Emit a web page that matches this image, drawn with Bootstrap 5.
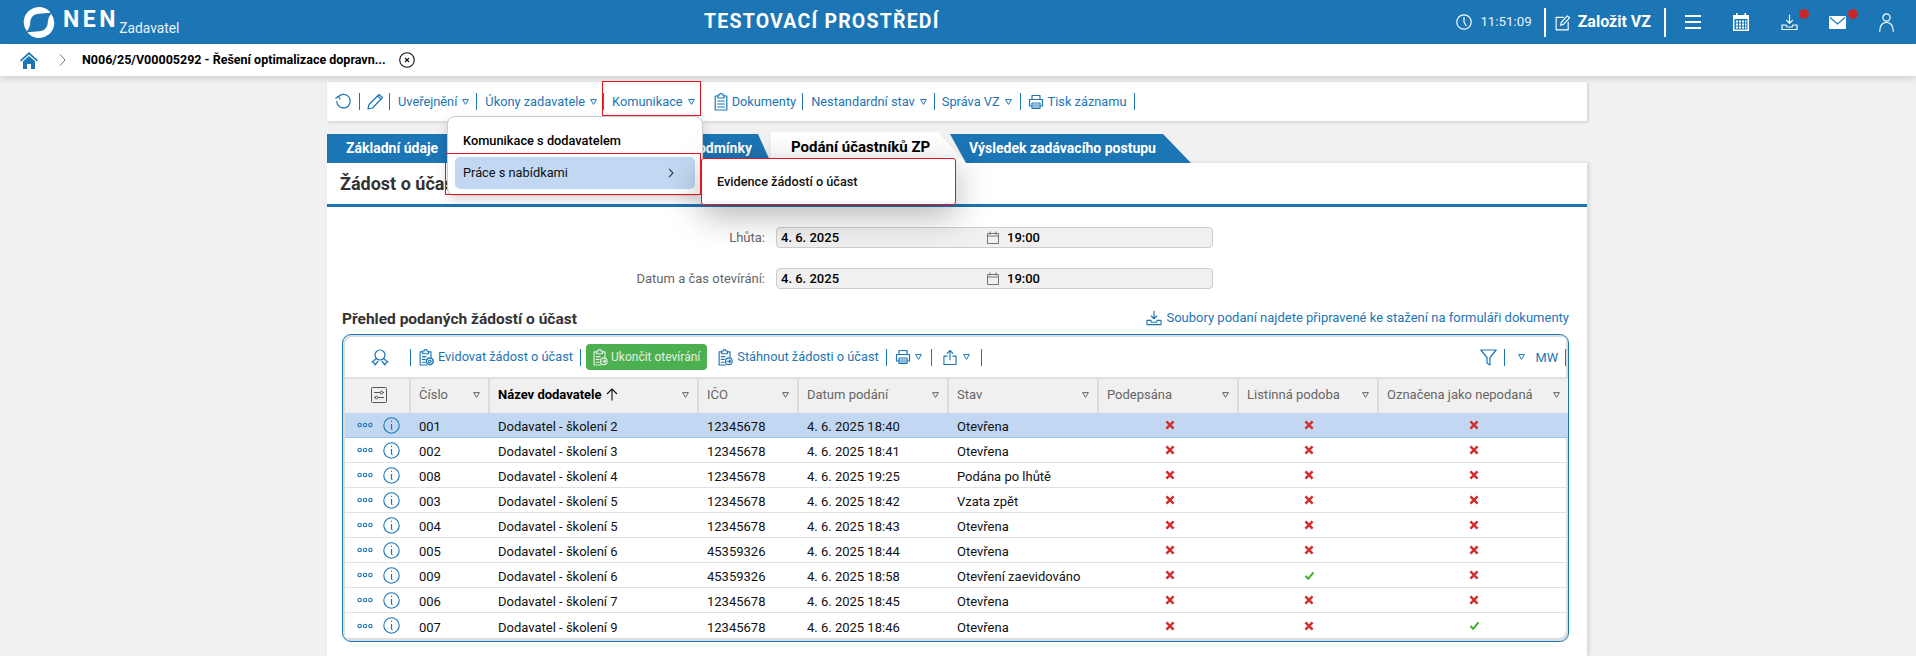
<!DOCTYPE html>
<html lang="cs">
<head>
<meta charset="utf-8">
<title>NEN</title>
<link rel="stylesheet" href="https://cdn.jsdelivr.net/npm/bootstrap@5.3.0/dist/css/bootstrap.min.css">
<style>
:root{--nen:#1c75b5;--sel:#c2d8f2;}
html,body{height:100%;overflow:hidden;}
body{background:#f1f1f1;font-family:Roboto,"Liberation Sans",sans-serif;font-size:13px;color:#111;}
svg{display:block;flex:none;}
.ic{fill:none;stroke:currentColor;stroke-width:1.2;stroke-linecap:round;stroke-linejoin:round;}
.mlx3{margin-left:3px}.mlx4{margin-left:4px}.mlx5{margin-left:5px}.mlx6{margin-left:6px}.mlx7{margin-left:7px}.mlx8{margin-left:8px}.mlx9{margin-left:9px}
.mlx10{margin-left:10px}.mlx11{margin-left:11px}.mlx12{margin-left:12px}.mlx13{margin-left:13px}.mlx16{margin-left:16px}.mlx19{margin-left:19px}.mlx20{margin-left:20px}.mlx21{margin-left:21px}.mlx26{margin-left:26px}.mlx32{margin-left:32px}.mlx33{margin-left:33px}.mlx31{margin-left:31px}
.topbar{height:44px;background:var(--nen);color:#fff;position:relative;}
.brand{margin-left:23px;width:300px;flex:none;}
.brand-nen{font-size:23px;font-weight:700;letter-spacing:3.6px;line-height:1;margin-left:8px;margin-top:-5px;}
.brand-sub{font-size:13.8px;align-self:flex-end;line-height:1;margin-bottom:2px;color:#e9f2f9;}
.env{margin-left:381px;font-size:19.5px;font-weight:700;letter-spacing:1.2px;white-space:nowrap;}
.rightset{margin-left:auto;margin-right:22px;}
.clock-txt{font-size:13.3px;color:#e8f1f8;}
.vsep{width:2px;height:29px;background:#fff;}
.create{font-size:16px;font-weight:700;}
.dotwrap{position:relative;display:block;}
.dotred{position:absolute;width:10px;height:10px;border-radius:50%;background:#c62828;}
.dot-in{left:18px;top:-5px;}
.dot-ml{left:19px;top:-7px;}
.crumb{height:32px;background:#fff;box-shadow:0 3px 6px rgba(0,0,0,.12);position:relative;z-index:3;color:#000;}
.crumb-t{font-weight:700;font-size:12.5px;width:304px;white-space:nowrap;}
.stage{width:1260px;margin-left:327px;position:relative;}
.tools{height:39px;background:#fff;margin-top:6px;box-shadow:1px 1px 3px rgba(0,0,0,.16);padding-left:8px;color:var(--nen);}
.tool{display:flex;align-items:center;white-space:nowrap;font-size:12.8px;}
.tsep{width:1px;height:17px;background:var(--nen);flex:none;}
.tri{width:7px;height:6px;flex:none;}
.tool .tri{margin-left:5px;}
.tabsrow{height:31px;margin-top:11px;display:flex;align-items:flex-end;}
.tabx{height:29px;background:var(--nen);color:#fff;font-weight:700;font-size:14px;display:flex;align-items:center;justify-content:space-between;white-space:nowrap;}
.tab-a{width:444px;padding:0 19px;clip-path:polygon(0 0,431px 0,444px 100%,0 100%);}
.tab-on{width:195px;height:31px;background:#fff;color:#000;font-size:15px;padding-left:20px;clip-path:polygon(0 0,167px 0,195px 100%,0 100%);position:relative;z-index:1;}
.tab-c{width:241px;margin-left:-16px;padding-left:19px;clip-path:polygon(0 0,213px 0,241px 100%,16px 100%);}
.sheet{background:#fff;height:493px;box-shadow:2px 0 4px rgba(0,0,0,.12);}
.sheet-head{height:44px;border-bottom:3px solid var(--nen);padding:0 13px;display:flex;align-items:center;font-size:18px;font-weight:700;color:#333;}
.frow{height:21px;margin-top:20px;display:flex;align-items:center;}
.flabel{width:449px;text-align:right;padding-right:11px;color:#666;font-size:13px;}
.finput{width:437px;height:21px;background:#f0f0f0;border:1px solid #ccc;border-radius:4px;display:flex;align-items:center;padding-left:4px;font-weight:500;color:#000;}
.fdate{width:206px;}
.fcal{color:#666;margin-right:8px;}
.listhead{margin:22px 18px 5px 15px;height:18px;}
.h-list{font-size:15.5px;font-weight:700;color:#333;line-height:1;}
.dl-link{color:var(--nen);font-size:13px;line-height:1;margin-bottom:5px;}
.panel{margin:0 18px 0 15px;height:308px;border:1px solid var(--nen);border-radius:9px;box-shadow:inset 2px 2px 0 #dedede,inset -2px -3px 0 #dedede;padding:2px 2px 4px 2px;}
.ptools{height:40px;color:var(--nen);}
.ml-auto-x{margin-left:auto;}
.mw-t{margin-left:10px;margin-top:2px;}
.sep-end{margin-left:7px;}
.btn-end{height:26px;background:#4caf50;border:0;color:#e3f2e4;font-size:12px;padding:0 7px;border-radius:4px;display:flex;align-items:center;gap:3px;white-space:nowrap;}
.grid-t{table-layout:fixed;width:1223px;margin:0;border-collapse:separate;border-spacing:0;font-size:13px;}
.grid-t>:not(caption)>*>*{padding:0;box-shadow:none;background:transparent;color:#111;border-bottom:0;}
.grid-t col:nth-child(1){width:66px}.grid-t col:nth-child(2){width:79px}.grid-t col:nth-child(3){width:209px}.grid-t col:nth-child(4){width:100px}.grid-t col:nth-child(5){width:150px}.grid-t col:nth-child(6){width:150px}.grid-t col:nth-child(7){width:140px}.grid-t col:nth-child(8){width:140px}.grid-t col:nth-child(9){width:189px}
.grid-t thead th{height:36px;background:#f0f0f0;color:#666;font-weight:400;border-top:2px solid #e0e0e0;border-right:2px solid #dcdcdc;padding-left:8px;padding-bottom:3px;vertical-align:middle;}
.grid-t thead th:last-child{border-right:0;}
.grid-t thead .strong{font-weight:700;color:#000;}
.grid-t tbody td{height:25px;border-bottom:1.5px solid #e2e2e2;padding-left:8px;padding-top:4px;vertical-align:middle;color:#111;}
.grid-t tbody tr:last-child td{border-bottom:0;}
.grid-t tbody tr.sel td{background:var(--sel);border-bottom-color:#9cc3ec;}
.grid-t tbody td:first-child{padding-top:0;}
.thin{display:flex;align-items:center;justify-content:space-between;padding-right:8px;}
.tcol{color:#666;}
.cfg{margin-left:18px;}
.cellic{display:flex;align-items:center;gap:10px;padding-left:4px;color:var(--nen);}
.grid-t tbody td.c-pod{padding-left:66px;padding-top:0;}
.grid-t tbody td.c-lis{padding-left:65px;padding-top:0;}
.grid-t tbody td.c-ozn{padding-left:90px;padding-top:0;}
.menu-a{position:absolute;left:120px;top:34px;width:256px;height:80px;background:#fff;border:1px solid #ccc;border-radius:8px;box-shadow:0 4px 12px rgba(0,0,0,.15);z-index:5;padding:8px 7px;color:#111;}
.menu-a-1{height:32px;display:flex;align-items:center;padding-left:8px;font-weight:500;font-size:12.8px;color:#000;}
.menu-a-2{height:32px;display:flex;align-items:center;justify-content:space-between;padding:0 21px 0 8px;background:var(--sel);border-radius:5px;font-size:12.8px;}
.menu-b{position:absolute;left:374px;top:76px;width:255px;height:47px;background:#fff;border-radius:4px;box-shadow:0 10px 34px rgba(0,0,0,.3);z-index:6;display:flex;align-items:center;padding-left:16px;font-weight:500;font-size:12.7px;color:#111;}
.redbox{position:absolute;border:1px solid #e5131f;z-index:7;pointer-events:none;}
.rb1{left:275px;top:-1px;width:99px;height:35px;}
.rb2{left:118px;top:71px;width:256px;height:42px;}
.rb3{left:374px;top:76px;width:255px;height:47px;border-radius:3px;}
</style>
</head>
<body>
<svg width="0" height="0" class="position-absolute">
<defs>
<symbol id="tri" viewBox="0 0 7 6"><path d="M.6.6h5.8L3.5 5.4z" fill="none" stroke="currentColor" stroke-width="1"/></symbol>
<symbol id="print" viewBox="0 0 16 16"><g class="ic"><path d="M4 5V1.5h8V5M4 12H1.5V5.5h13V12H12"/><path d="M4 9h8v5.5H4zM5.5 11h5M5.5 13h5"/></g></symbol>
<symbol id="clip" viewBox="0 0 14 18"><g class="ic"><path d="M4 3H1.2v14h11.600V3H10M4 2h1.5a1.5 1.5 0 0 1 3 0H10v3H4z"/><path d="M3.5 8h7M3.5 11h7M3.5 14h7"/></g></symbol>
<symbol id="clipgo" viewBox="0 0 16 18"><g class="ic"><path d="M4 3H1.2v14h7M10 3h2.800v6M4 2h1.5a1.5 1.5 0 0 1 3 0H10v3H4z"/><path d="M3.5 8h4M3.5 11h3M3.5 14h3"/><circle cx="11.5" cy="13" r="3.6"/><path d="M9.5 13h4M12 11.5l1.5 1.5-1.5 1.5"/></g></symbol>
<symbol id="clipgear" viewBox="0 0 16 18"><g class="ic"><path d="M4 3H1.2v14h7M10 3h2.800v6M4 2h1.5a1.5 1.5 0 0 1 3 0H10v3H4z"/><path d="M3.5 8h4M3.5 11h3M3.5 14h3"/><circle cx="11.5" cy="13" r="1.4"/><circle cx="11.5" cy="13" r="3.6" stroke-dasharray="1.6 1.2" stroke-width="1.6"/></g></symbol>
<symbol id="inbox" viewBox="0 0 17 17"><g class="ic" stroke-width="1.4"><path d="M8.5 1v8M5.6 6.400l2.900 2.900 2.900-2.900"/><path d="M1 11h4l1 2h5l1-2h4v4.500H1z"/></g></symbol>
<symbol id="cross" viewBox="0 0 10 10"><path d="M1.400 1.400l7.200 7.200M8.600 1.400L1.400 8.600" stroke="#d32f2f" stroke-width="2.500" fill="none"/></symbol>
<symbol id="check" viewBox="0 0 10 9"><path d="M1 5l2.700 2.800L9 1.300" stroke="#43b02a" stroke-width="2" fill="none"/></symbol>
<symbol id="dots" viewBox="0 0 16 6"><g fill="none" stroke="currentColor" stroke-width="1.1"><circle cx="2.6" cy="3" r="1.7"/><circle cx="8" cy="3" r="1.7"/><circle cx="13.4" cy="3" r="1.7"/></g></symbol>
<symbol id="info" viewBox="0 0 17 17"><circle cx="8.5" cy="8.5" r="7.7" fill="none" stroke="currentColor" stroke-width="1.1"/><path d="M8 4.400h1M8.500 7v4.400q0 1.200 1 1.200" fill="none" stroke="currentColor" stroke-width="1.2"/></symbol>
<symbol id="cal" viewBox="0 0 12 13"><g fill="none" stroke="currentColor" stroke-width=".9"><path d="M.5 2.500h11v10H.5zM.5 5h11M3 .5v3M9 .5v3"/></g></symbol>
</defs>
</svg>

<header class="topbar d-flex align-items-center">
  <div class="brand d-flex align-items-center">
    <svg width="32" height="31" viewBox="0 0 32 32" fill="#fff"><path d="M3.500 25A15.500 15.500 0 0 1 28 6C24 6 20 7 16 7 10.500 7 7 11 6.900 16.500 6.700 19.500 5.500 23 3.500 25z"/><path transform="rotate(180 16 16)" d="M3.500 25A15.500 15.500 0 0 1 28 6C24 6 20 7 16 7 10.500 7 7 11 6.900 16.500 6.700 19.500 5.500 23 3.500 25z"/></svg>
    <span class="brand-nen">NEN</span><span class="brand-sub">Zadavatel</span>
  </div>
  <div class="env">TESTOVACÍ PROSTŘEDÍ</div>
  <div class="rightset d-flex align-items-center">
    <svg width="16" height="16" viewBox="0 0 16 16" class="ic"><circle cx="8" cy="8" r="7.200"/><path d="M8 3.500V8l2 3.500"/></svg>
    <span class="clock-txt mlx8">11:51:09</span>
    <span class="vsep mlx12"></span>
    <svg class="mlx9" width="16" height="17" viewBox="0 0 17 17"><g class="ic"><path d="M9 3H1.200v13.300H14V8"/><path d="M6 11.500l.6-3L13 1.500l2.500 2-6.500 7z"/></g></svg>
    <span class="create mlx7">Založit VZ</span>
    <span class="vsep mlx13"></span>
    <svg class="mlx19" width="16" height="14" viewBox="0 0 16 14" fill="#fff"><rect y="0" width="16" height="2"/><rect y="6" width="16" height="2"/><rect y="12" width="16" height="2"/></svg>
    <svg class="mlx32" width="16" height="18" viewBox="0 0 16 18"><path fill="#fff" d="M3 0h1.500v2h7V0H13v2h3v16H0V2h3z"/><path fill="#1c75b5" d="M1.500 6h13v10.500h-13z"/><g fill="#fff"><path d="M3 7.500h2v2H3zM6 7.500h2v2H6zM9 7.500h2v2H9zM12 7.500h1.500v2H12zM3 10.500h2v2H3zM6 10.500h2v2H6zM9 10.500h2v2H9zM12 10.500h1.500v2H12zM3 13.500h2v2H3zM6 13.500h2v2H6zM9 13.500h2v2H9zM12 13.500h1.500v2H12z"/></g></svg>
    <span class="dotwrap mlx32"><svg width="17" height="17" color="#fff"><use href="#inbox"/></svg><span class="dotred dot-in"></span></span>
    <span class="dotwrap mlx31"><svg width="17" height="13" viewBox="0 0 17 13"><rect width="17" height="13" rx="1" fill="#fff"/><path d="M1 1.500l7.500 6.500L16 1.500" fill="none" stroke="#1c75b5" stroke-width="1.100"/></svg><span class="dotred dot-ml"></span></span>
    <svg class="mlx33" width="15" height="19" viewBox="0 0 15 19"><g class="ic" stroke-width="1.300"><circle cx="7.500" cy="4.500" r="3.600"/><path d="M.8 18.300C.8 12.500 3.500 9.500 7.500 9.500s6.700 3 6.700 8.800"/></g></svg>
  </div>
</header>

<nav class="crumb d-flex align-items-center">
  <svg class="mlx20" width="18" height="17" viewBox="0 0 18 17"><path fill="#1c75b5" d="M9 0L18 8.200l-1 1.300L9 2.500 1 9.500 0 8.200z"/><path fill="#1c75b5" d="M9 4l6 5.300V17h-4v-5H7v5H3V9.300z"/></svg>
  <svg class="mlx21" width="7" height="12" viewBox="0 0 7 12"><path d="M1 .5L6 6l-5 5.500" fill="none" stroke="#777" stroke-width="1"/></svg>
  <span class="crumb-t mlx16">N006/25/V00005292 - Řešení optimalizace dopravn...</span>
  <svg class="mlx13" width="16" height="16" viewBox="0 0 16 16"><circle cx="8" cy="8" r="7.300" fill="none" stroke="#111" stroke-width="1.100"/><path d="M6 6l4 4M10 6l-4 4" stroke="#111" stroke-width="1.100"/></svg>
</nav>

<main class="stage">
  <div class="tools d-flex align-items-center">
    <svg width="17" height="17" viewBox="0 0 17 17"><g class="ic"><path d="M3.500 3.500A6.800 6.800 0 1 1 1.700 8.500"/><path d="M.8 5.200L3.300 3.300 5 6"/></g></svg>
    <span class="tsep mlx7"></span>
    <svg class="mlx7" width="17" height="17" viewBox="0 0 17 17"><g class="ic"><path d="M1 16l1-4.500L12 1.500l3.500 3L5.500 15z"/><path d="M10.500 3l3.500 3"/></g></svg>
    <span class="tsep mlx5"></span>
    <span class="tool mlx8">Uveřejnění<svg class="tri"><use href="#tri"/></svg></span>
    <span class="tsep mlx7"></span>
    <span class="tool mlx8">Úkony zadavatele<svg class="tri"><use href="#tri"/></svg></span>
    <span class="tsep mlx6"></span>
    <span class="tool mlx8">Komunikace<svg class="tri"><use href="#tri"/></svg></span>
    <svg class="mlx19" width="14" height="18"><use href="#clip"/></svg>
    <span class="tool mlx4">Dokumenty</span>
    <span class="tsep mlx6"></span>
    <span class="tool mlx8">Nestandardní stav<svg class="tri"><use href="#tri"/></svg></span>
    <span class="tsep mlx7"></span>
    <span class="tool mlx7">Správa VZ<svg class="tri"><use href="#tri"/></svg></span>
    <span class="tsep mlx8"></span>
    <svg class="mlx7" width="16" height="16"><use href="#print"/></svg>
    <span class="tool mlx4">Tisk záznamu</span>
    <span class="tsep mlx7"></span>
  </div>

  <div class="tabsrow">
    <div class="tabx tab-a"><span>Základní údaje</span><span>Zadávací podmínky</span></div>
    <div class="tabx tab-on">Podání účastníků ZP</div>
    <div class="tabx tab-c">Výsledek zadávacího postupu</div>
  </div>

  <section class="sheet">
    <div class="sheet-head">Žádost o účast</div>
    <div class="frow"><span class="flabel">Lhůta:</span><div class="finput"><span class="fdate">4. 6. 2025</span><svg class="fcal" width="12" height="13"><use href="#cal"/></svg>19:00</div></div>
    <div class="frow"><span class="flabel">Datum a čas otevírání:</span><div class="finput"><span class="fdate">4. 6. 2025</span><svg class="fcal" width="12" height="13"><use href="#cal"/></svg>19:00</div></div>
    <div class="listhead d-flex justify-content-between align-items-center">
      <span class="h-list">Přehled podaných žádostí o účast</span>
      <span class="dl-link d-flex align-items-center gap-1"><svg width="16" height="16" color="#1c75b5"><use href="#inbox"/></svg>Soubory podaní najdete připravené ke stažení na formuláři dokumenty</span>
    </div>
    <div class="panel">
      <div class="ptools d-flex align-items-center">
        <svg class="mlx26" width="18" height="17" viewBox="0 0 18 17"><g class="ic"><circle cx="9" cy="6" r="5"/><path d="M5 10L1 13l2 .5L4 16l3-3.500M13 10l4 3-2 .5-1 2.500-3-3.500"/></g></svg>
        <span class="tsep mlx21"></span>
        <svg class="mlx8" width="15" height="17"><use href="#clipgear"/></svg>
        <span class="tool mlx4">Evidovat žádost o účast</span>
        <span class="tsep mlx7"></span>
        <button type="button" class="btn-end mlx5"><svg width="15" height="17"><use href="#clipgo"/></svg>Ukončit otevírání</button>
        <svg class="mlx11" width="15" height="17"><use href="#clipgo"/></svg>
        <span class="tool mlx4">Stáhnout žádosti o účast</span>
        <span class="tsep mlx7"></span>
        <svg class="mlx8" width="16" height="16"><use href="#print"/></svg>
        <svg class="tri mlx4"><use href="#tri"/></svg>
        <span class="tsep mlx9"></span>
        <svg class="mlx11" width="14" height="17" viewBox="0 0 15 17"><g class="ic"><path d="M4.500 7H1v9h13V7h-3.500"/><path d="M7.500 11V1M4.500 4l3-3 3 3"/></g></svg>
        <svg class="tri mlx6"><use href="#tri"/></svg>
        <span class="tsep mlx11"></span>
        <svg class="ml-auto-x" width="17" height="17" viewBox="0 0 17 17"><g class="ic"><path d="M.8 1h15.400L10 8.500V16l-3-2V8.500z"/></g></svg>
        <span class="tsep mlx7"></span>
        <svg class="tri mlx13"><use href="#tri"/></svg>
        <span class="tool mw-t">MW</span>
        <span class="tsep sep-end"></span>
      </div>
      <table class="table grid-t">
        <colgroup><col><col><col><col><col><col><col><col><col></colgroup>
        <thead>
          <tr>
            <th><svg class="cfg" width="16" height="16" viewBox="0 0 16 16"><g fill="none" stroke="#555" stroke-width="1"><rect x=".5" y=".5" width="15" height="15" rx="1"/><path d="M3 5.500h10M3 10.500h10"/><circle cx="10.500" cy="5.500" r="1.400" fill="#f0f0f0"/><circle cx="5.500" cy="10.500" r="1.400" fill="#f0f0f0"/></g></svg></th>
            <th><div class="thin">Číslo<svg class="tri tcol"><use href="#tri"/></svg></div></th>
            <th><div class="thin"><span class="strong d-flex align-items-center">Název dodavatele<svg class="ms-1" width="12" height="13" viewBox="0 0 12 13"><path d="M6 12.500V1M1 6l5-5 5 5" fill="none" stroke="#111" stroke-width="1.100"/></svg></span><svg class="tri tcol"><use href="#tri"/></svg></div></th>
            <th><div class="thin">IČO<svg class="tri tcol"><use href="#tri"/></svg></div></th>
            <th><div class="thin">Datum podání<svg class="tri tcol"><use href="#tri"/></svg></div></th>
            <th><div class="thin">Stav<svg class="tri tcol"><use href="#tri"/></svg></div></th>
            <th><div class="thin">Podepsána<svg class="tri tcol"><use href="#tri"/></svg></div></th>
            <th><div class="thin">Listinná podoba<svg class="tri tcol"><use href="#tri"/></svg></div></th>
            <th><div class="thin">Označena jako nepodaná<svg class="tri tcol"><use href="#tri"/></svg></div></th>
          </tr>
        </thead>
        <tbody id="rows"></tbody>
      </table>
    </div>
  </section>

  <div class="menu-a">
    <div class="menu-a-1">Komunikace s dodavatelem</div>
    <div class="menu-a-2">Práce s nabídkami<svg width="6" height="10" viewBox="0 0 6 10"><path d="M1 .8L5 5 1 9.200" fill="none" stroke="#333" stroke-width="1.100"/></svg></div>
  </div>
  <div class="menu-b">Evidence žádostí o účast</div>
  <span class="redbox rb1"></span><span class="redbox rb2"></span><span class="redbox rb3"></span>
</main>

<script src="https://cdn.jsdelivr.net/npm/bootstrap@5.3.0/dist/js/bootstrap.bundle.min.js"></script>
<script>
var data=[
["001","Dodavatel - školení 2","12345678","4. 6. 2025 18:40","Otevřena",0,0,0],
["002","Dodavatel - školení 3","12345678","4. 6. 2025 18:41","Otevřena",0,0,0],
["008","Dodavatel - školení 4","12345678","4. 6. 2025 19:25","Podána po lhůtě",0,0,0],
["003","Dodavatel - školení 5","12345678","4. 6. 2025 18:42","Vzata zpět",0,0,0],
["004","Dodavatel - školení 5","12345678","4. 6. 2025 18:43","Otevřena",0,0,0],
["005","Dodavatel - školení 6","45359326","4. 6. 2025 18:44","Otevřena",0,0,0],
["009","Dodavatel - školení 6","45359326","4. 6. 2025 18:58","Otevření zaevidováno",0,1,0],
["006","Dodavatel - školení 7","12345678","4. 6. 2025 18:45","Otevřena",0,0,0],
["007","Dodavatel - školení 9","12345678","4. 6. 2025 18:46","Otevřena",0,0,1]];
function m(v){return v?'<svg width="11" height="9"><use href="#check"/></svg>':'<svg width="10" height="10"><use href="#cross"/></svg>';}
document.getElementById('rows').innerHTML=data.map(function(r,i){
return '<tr'+(i==0?' class="sel"':'')+'><td><div class="cellic"><svg width="16" height="6"><use href="#dots"/></svg><svg width="17" height="17"><use href="#info"/></svg></div></td><td>'+r[0]+'</td><td>'+r[1]+'</td><td>'+r[2]+'</td><td>'+r[3]+'</td><td>'+r[4]+'</td><td class="c-pod">'+m(r[5])+'</td><td class="c-lis">'+m(r[6])+'</td><td class="c-ozn">'+m(r[7])+'</td></tr>';
}).join('');
</script>
</body>
</html>
